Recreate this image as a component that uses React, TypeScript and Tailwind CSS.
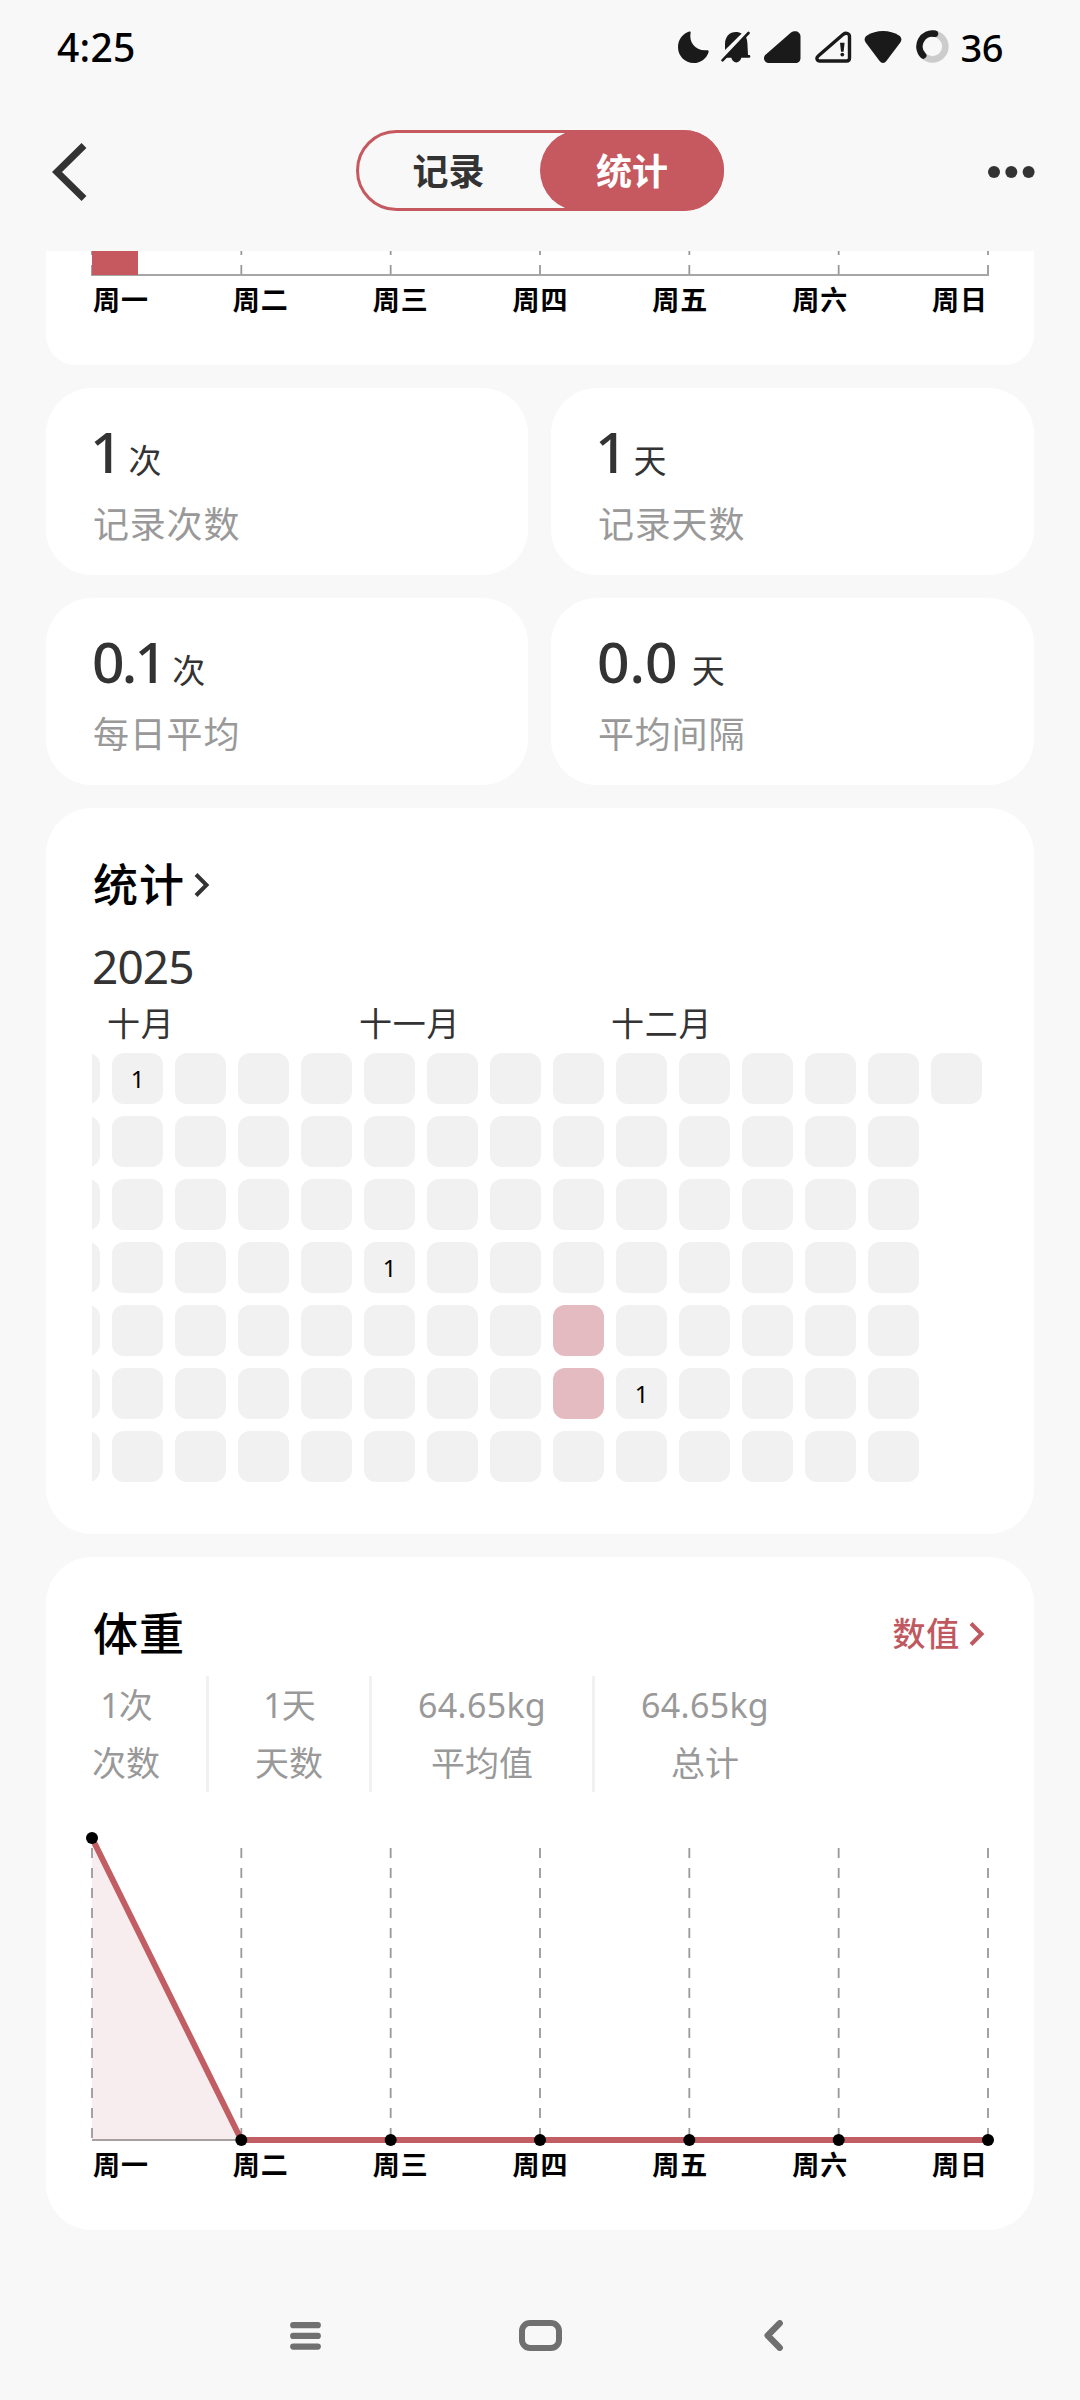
const DAYS = ['周一', '周二', '周三', '周四', '周五', '周六', '周日'];
const GRID_X = [0, 149.33, 298.67, 448, 597.33, 746.67, 896];

function StatusIcons() {
  return (
    <div className="flex items-center text-[#1a1a1a]">
      {/* Do not disturb */}
      <svg width="31" height="32" viewBox="0 0 31 32" fill="currentColor">
        <path d="M11.2 .6c.9-.3 1.7.2 1.4 1.2C10.800 11 17 20.300 29 19.300c1.200-.1 1.900.6 1.600 1.600C28.800 27.300 22.700 32 15.600 32 7 32 0 25 0 16.200 0 8.800 4.700 2.700 11.200.6Z" />
      </svg>
      {/* Muted bell */}
      <svg className="ml-[12px]" width="30" height="32" viewBox="0 0 30 32" fill="currentColor">
        <path d="M15 1c2.200 0 4.100.6 5.700 1.600L4 19V13C4 5.500 8.500 1 15 1Z" />
        <path d="M24.600 5.500c1.200 2 1.700 4.500 1.800 7L27 24h1c1.800 0 1.800 2.800 0 2.800h-7.700c-.7 2.700-2.600 4.700-5 4.700s-4.300-2-5-4.700H4.500Z" />
        <path d="M1.500 29.300 27.500 2" stroke="currentColor" strokeWidth="2.600" strokeLinecap="round" fill="none" />
      </svg>
      {/* Signal, first SIM */}
      <svg className="ml-[13px]" width="37" height="32" viewBox="0 0 37 32" fill="currentColor">
        <path d="M27 1.600C31 -1.400 36.500.7 36.500 5.500V27c0 3-2 5-5 5H5C.2 32-1.700 26.500 1.800 23.500Z" />
      </svg>
      {/* Signal, second SIM */}
      <svg className="ml-[14px]" width="37" height="32" viewBox="0 0 37 32" fill="none">
        <path d="M28.300 3.300c2.700-2.100 6.200-.8 6.200 2.200V27c0 2-1 3-3 3H5c-3.200 0-4-3.200-1.800-5Z" stroke="currentColor" strokeWidth="3.400" strokeLinejoin="round" />
        <path d="M25 11.700h4.600l-1 9h-2.600Z" fill="currentColor" />
        <circle cx="27.300" cy="23.600" r="1.900" fill="currentColor" />
      </svg>
      {/* Wi-Fi */}
      <svg className="ml-[12px]" width="38" height="32" viewBox="0 0 38 32" fill="currentColor">
        <path d="M19 0c6 0 11.500 1.600 16 4.600 2.600 1.800 3.100 4.500 1.300 6.900L22.400 30c-1.900 2.500-4.900 2.500-6.800 0L1.700 11.500C-.1 9.100.4 6.400 3 4.600 7.500 1.600 13 0 19 0Z" />
      </svg>
      {/* Battery ring */}
      <svg className="ml-[14px]" width="33" height="33" viewBox="0 0 33 33" fill="none">
        <circle cx="16.500" cy="16.500" r="12.900" stroke="#cccccc" strokeWidth="6.500" />
        <path d="M19 3.800A12.900 12.900 0 0 0 7.200 25.500" stroke="currentColor" strokeWidth="6.500" strokeLinecap="round" />
      </svg>
      <span className="ml-[12px] text-[38px] font-medium leading-none tracking-[-0.5px] text-black">36</span>
    </div>
  );
}

function Chevron({ className }: { className: string }) {
  return (
    <svg className={className} width="16" height="24" viewBox="0 0 16 24" fill="none">
      <path d="M2 1.500 12.500 12 2 22.500" stroke="currentColor" strokeWidth="4" />
    </svg>
  );
}

function DayLabels() {
  return (
    <div className="flex h-[40px] justify-between pl-px text-[27px] font-semibold leading-[40px] tracking-[1px] text-black">
      {DAYS.map((d) => (
        <span key={d}>{d}</span>
      ))}
    </div>
  );
}

type StatCardProps = { value: string; unit: string; label: string; valueClass: string };

function StatCard({ value, unit, label, valueClass }: StatCardProps) {
  return (
    <div className="h-[187px] rounded-[46px] bg-white pl-[46px] pt-[33px]">
      <div className="flex h-[60px] items-baseline text-[#333333]">
        <span className={`text-[57px] font-medium leading-[60px] ${valueClass}`}>{value}</span>
        <span className="text-[33px] leading-none">{unit}</span>
      </div>
      <div className="mt-[19px] pl-px text-[36px] leading-[50px] tracking-[0.8px] text-[#999999]">{label}</div>
    </div>
  );
}

const MARKS: Record<string, string> = { '1-0': '1', '5-3': '1', '9-5': '1' };
const FILLED = new Set(['8-4', '8-5']);

function Heatmap() {
  return (
    <div className="mt-[8px] overflow-hidden">
      <div className="-ml-[43px] flex gap-[12px]">
        {Array.from({ length: 15 }, (_, c) => (
          <div key={c} className="flex shrink-0 flex-col gap-[12px]">
            {Array.from({ length: c === 14 ? 1 : 7 }, (_, r) => (
              <div
                key={r}
                className={`flex size-[51px] items-center justify-center rounded-[12px] pt-px text-[24px] leading-none text-black ${
                  FILLED.has(`${c}-${r}`) ? 'bg-[#e4bbc0]' : 'bg-[#f1f1f1]'
                }`}
              >
                {MARKS[`${c}-${r}`]}
              </div>
            ))}
          </div>
        ))}
      </div>
    </div>
  );
}

const SUMMARY = [
  ['1次', '次数'],
  ['1天', '天数'],
  ['64.65kg', '平均值'],
  ['64.65kg', '总计'],
];

export default function App() {
  return (
    <div className="flex h-[2400px] w-[1080px] flex-col overflow-hidden bg-[#f8f8f8] font-['Noto_Sans','Noto_Sans_CJK_SC',sans-serif]">
      <div className="flex h-[94px] items-center justify-between pb-px pl-[57px] pr-[77px]">
        <span className="text-[39px] font-medium leading-none tracking-[0.3px] text-black">4:25</span>
        <StatusIcons />
      </div>

      <header className="flex h-[153px] items-center justify-between pl-[52px] pr-[45px]">
        <svg className="mt-[2px]" width="36" height="58" viewBox="0 0 36 58" fill="none">
          <path d="M32 2.500 5 29 32 55.500" stroke="#333333" strokeWidth="7" />
        </svg>
        <div className="ml-[5px] flex h-[81px] w-[368px] rounded-full border-[3px] border-[#c5595f] text-[36px] font-bold leading-none">
          <div className="flex flex-1 items-center justify-center pr-[2px] pt-[2px] text-[#333333]">记录</div>
          <div className="-my-[3px] -mr-[3px] flex w-[184px] items-center justify-center rounded-full bg-[#c5595f] pt-[2px] text-white">
            统计
          </div>
        </div>
        <svg className="mt-[2px]" width="48" height="12" viewBox="0 0 48 12" fill="#333333">
          <circle cx="7" cy="6" r="6" />
          <circle cx="24.300" cy="6" r="6" />
          <circle cx="41.600" cy="6" r="6" />
        </svg>
      </header>

      <main className="mt-[4px] flex flex-col gap-[23px] px-[46px]">
        <section className="h-[114px] rounded-b-[30px] bg-white px-[46px]">
          <svg className="block overflow-visible" width="896" height="29" viewBox="0 0 896 29">
            {GRID_X.map((x) => (
              <path key={x} d={`M${x} 0V4M${x} 14V24`} stroke="#999999" strokeWidth="1.800" />
            ))}
            <path d="M-1 24H897" stroke="#a6a6a6" strokeWidth="2" />
            <rect x="0" y="0" width="46" height="24" fill="#c5595f" />
          </svg>
          <DayLabels />
        </section>

        <div className="grid grid-cols-[482px_483px] gap-[23px]">
          <StatCard value="1" unit="次" label="记录次数" valueClass="-ml-[2px] mr-[6px]" />
          <StatCard value="1" unit="天" label="记录天数" valueClass="-ml-[2px] mr-[6px]" />
          <StatCard value="0.1" unit="次" label="每日平均" valueClass="mr-[8px] tracking-[-2.8px]" />
          <StatCard value="0.0" unit="天" label="平均间隔" valueClass="mr-[14px]" />
        </div>

        <section className="h-[726px] rounded-[46px] bg-white px-[46px] pt-[52px]">
          <div className="flex h-[50px] items-center">
            <h2 className="pl-px text-[45px] font-medium leading-[50px] tracking-[1px] text-black">统计</h2>
            <Chevron className="ml-[9px] text-[#333333]" />
          </div>
          <div className="mt-[26px] h-[60px] text-[46px] leading-[60px] tracking-[-0.9px] text-[#333333]">2025</div>
          <div className="mt-[6px] flex h-[43px] pl-[15px] text-[33px] leading-[44px] tracking-[0.8px] text-[#333333]">
            <span className="w-[252px]">十月</span>
            <span className="w-[252px]">十一月</span>
            <span className="w-[252px]">十二月</span>
          </div>
          <Heatmap />
        </section>

        <section className="h-[673px] rounded-[46px] bg-white px-[46px] pt-[52px]">
          <div className="flex h-[50px] items-center justify-between">
            <h2 className="pl-px text-[45px] font-medium leading-[50px] tracking-[1px] text-black">体重</h2>
            <div className="flex items-center pr-[3px] text-[#c0595f]">
              <span className="text-[33px] font-medium leading-[48px] tracking-[0.8px]">数值</span>
              <Chevron className="ml-[9px]" />
            </div>
          </div>
          <div className="mt-[17px] flex h-[116px] text-[34px] leading-[58px] text-[#999999]">
            {SUMMARY.map(([value, name], i) => (
              <div
                key={name}
                className={`flex flex-col items-center pr-[46px] ${i > 0 ? 'border-l-[3px] border-[#f1f1f1] pl-[46px]' : ''}`}
              >
                <span className={i > 1 ? 'w-[128px] text-center tracking-[0.3px]' : 'tracking-[-1px]'}>{value}</span>
                <span>{name}</span>
              </div>
            ))}
          </div>
          <svg className="mt-[40px] block overflow-visible" width="896" height="313" viewBox="0 0 896 313">
            <path d="M0 6 149.330 308H0Z" fill="#f7edee" />
            {GRID_X.map((x) => (
              <path key={x} d={`M${x} 16V308`} stroke="#999999" strokeWidth="1.800" strokeDasharray="10 10" />
            ))}
            <path d="M0 308H150" stroke="#a6a0a1" strokeWidth="2" />
            <path d="M0 6 149.330 308H896" stroke="#c15e64" strokeWidth="6" fill="none" strokeLinejoin="bevel" />
            {GRID_X.map((x, i) => (
              <circle key={x} cx={x} cy={i === 0 ? 6 : 308} r="6" fill="#000000" />
            ))}
          </svg>
          <DayLabels />
        </section>
      </main>

      <nav className="flex flex-1 items-center pl-[290px] pt-[41px] text-[#707070]">
        <svg width="31" height="28" viewBox="0 0 31 28">
          <path d="M3.200 3.200H27.800M3.200 13.900H27.800M3.200 24.600H27.800" stroke="currentColor" strokeWidth="6.200" strokeLinecap="round" />
        </svg>
        <div className="ml-[198px] h-[31px] w-[43px] rounded-[11px] border-[6px] border-[#707070]" />
        <svg className="ml-[202px]" width="20" height="31" viewBox="0 0 20 31" fill="none">
          <path d="M15.700 3.300 3.700 15.500 15.700 27.700" stroke="currentColor" strokeWidth="6.400" strokeLinecap="round" strokeLinejoin="round" />
        </svg>
      </nav>
    </div>
  );
}
